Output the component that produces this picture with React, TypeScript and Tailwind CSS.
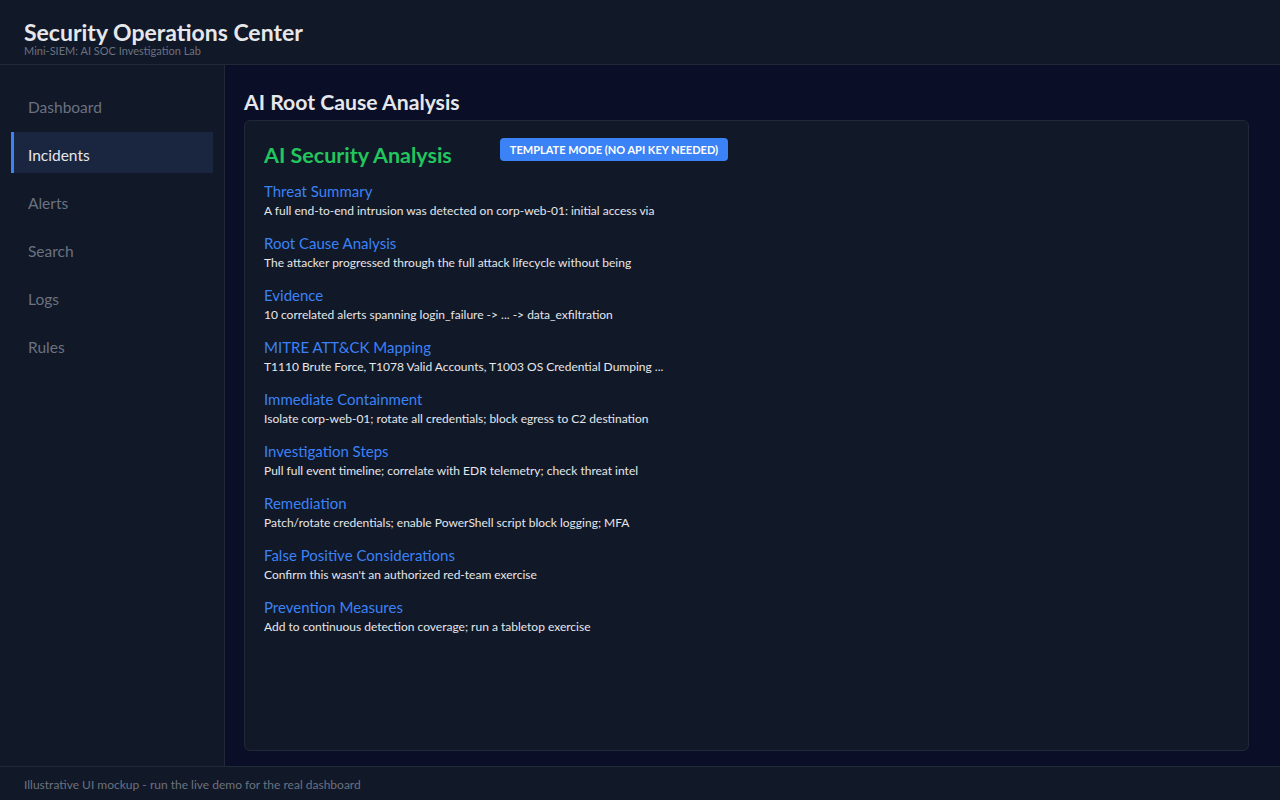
import React from "react";

const navItems = ["Dashboard", "Incidents", "Alerts", "Search", "Logs", "Rules"];

const sections = [
  {
    title: "Threat Summary",
    body: "A full end-to-end intrusion was detected on corp-web-01: initial access via",
  },
  {
    title: "Root Cause Analysis",
    body: "The attacker progressed through the full attack lifecycle without being",
  },
  {
    title: "Evidence",
    body: "10 correlated alerts spanning login_failure -> ... -> data_exfiltration",
  },
  {
    title: "MITRE ATT&CK Mapping",
    body: "T1110 Brute Force, T1078 Valid Accounts, T1003 OS Credential Dumping ...",
  },
  {
    title: "Immediate Containment",
    body: "Isolate corp-web-01; rotate all credentials; block egress to C2 destination",
  },
  {
    title: "Investigation Steps",
    body: "Pull full event timeline; correlate with EDR telemetry; check threat intel",
  },
  {
    title: "Remediation",
    body: "Patch/rotate credentials; enable PowerShell script block logging; MFA",
  },
  {
    title: "False Positive Considerations",
    body: "Confirm this wasn't an authorized red-team exercise",
  },
  {
    title: "Prevention Measures",
    body: "Add to continuous detection coverage; run a tabletop exercise",
  },
];

export default function App() {
  return (
    <div className="flex h-[800px] w-[1280px] flex-col overflow-hidden bg-[#0a0e27] font-['Lato',sans-serif] text-[#e5e7eb]">
      {/* Header */}
      <header className="h-[65px] shrink-0 border-b border-[#1f2937] bg-[#111827] px-6 pt-[19px]">
        <h1 className="text-[23px] font-bold leading-[26px] text-[#e5e7eb]">
          Security Operations Center
        </h1>
        <p className="text-[11px] leading-[12px] text-[#6b7280]">
          Mini-SIEM: AI SOC Investigation Lab
        </p>
      </header>

      <div className="flex min-h-0 flex-1">
        {/* Sidebar */}
        <nav className="flex w-[225px] shrink-0 flex-col gap-[7px] border-r border-[#1f2937] bg-[#111827] px-[11px] pt-[19px]">
          {navItems.map((item) => (
            <div
              key={item}
              className={
                item === "Incidents"
                  ? "flex h-[41px] items-center border-l-[3px] border-[#3b82f6] bg-[#1a2540] pl-[14px] pt-[6px] text-[15.5px] text-[#e5e7eb]"
                  : "flex h-[41px] items-center border-l-[3px] border-transparent pl-[14px] pt-[6px] text-[15.5px] text-[#6b7280]"
              }
            >
              {item}
            </div>
          ))}
        </nav>

        {/* Main */}
        <main className="flex min-w-0 flex-1 flex-col pb-[15px] pl-[19px] pr-[31px] pt-[25px]">
          <h2 className="mb-[5px] text-[21.2px] font-bold leading-[25px] text-[#e5e7eb]">
            AI Root Cause Analysis
          </h2>
          <div className="flex-1 rounded-md border border-[#1f2937] bg-[#111827] px-[19px] pt-[17px]">
            <div className="flex items-start">
              <h3 className="mt-[5px] text-[21.5px] font-bold leading-[24px] text-[#22c55e]">
                AI Security Analysis
              </h3>
              <span className="ml-[48px] rounded-[4px] bg-[#3b82f6] px-[10px] py-[4px] text-[11px] font-bold leading-[15px] text-white">
                TEMPLATE MODE (NO API KEY NEEDED)
              </span>
            </div>
            <div className="mt-[14px] flex flex-col gap-[14px]">
              {sections.map((s) => (
                <div key={s.title}>
                  <div className="text-[15px] leading-[20px] text-[#3b82f6]">{s.title}</div>
                  <div className="mt-[1px] text-[12px] leading-[17px] text-[#e5e7eb]">{s.body}</div>
                </div>
              ))}
            </div>
          </div>
        </main>
      </div>

      {/* Footer */}
      <footer className="flex h-[34px] shrink-0 items-center border-t border-[#1f2937] bg-[#111827] px-6 pt-[2px] text-[12px] text-[#6b7280]">
        Illustrative UI mockup - run the live demo for the real dashboard
      </footer>
    </div>
  );
}
